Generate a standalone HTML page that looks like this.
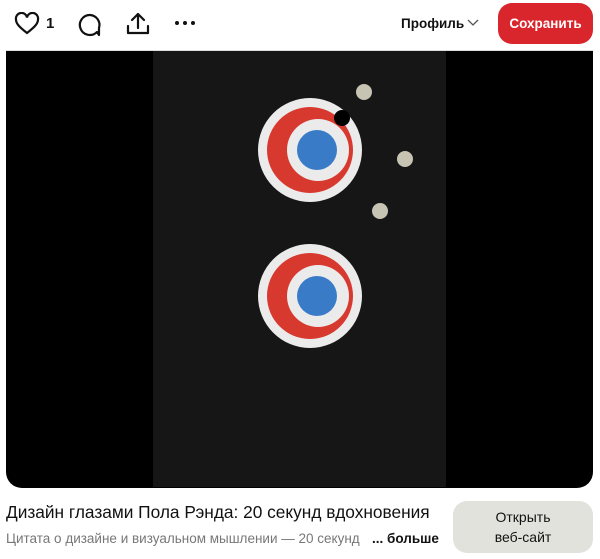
<!DOCTYPE html>
<html><head><meta charset="utf-8"><style>
body{margin:0;width:600px;height:559px;background:#fff;font-family:"Liberation Sans","Noto Sans CJK SC",sans-serif;position:relative;overflow:hidden}
.a{position:absolute}
</style></head><body>
<svg class="a" style="left:14px;top:12px" width="26" height="24" viewBox="0 0 26 24"><path d="M13 21 C4 14 2 11 2 7.5 A5 5 0 0 1 13 5.5 A5 5 0 0 1 24 7.5 C24 11 22 14 13 21Z" fill="none" stroke="#111" stroke-width="2.2"/></svg>
<div class="a" style="left:46px;top:15px;font-size:15px;font-weight:bold;color:#111">1</div>
<svg class="a" style="left:77px;top:12px" width="26" height="26" viewBox="0 0 26 26"><path d="M13 3 A10 10 0 1 0 20 20 L22 23 L22 16 A10 10 0 0 0 13 3Z" fill="none" stroke="#111" stroke-width="2.2" stroke-linejoin="round"/></svg>
<svg class="a" style="left:125px;top:11px" width="26" height="26" viewBox="0 0 26 26"><path d="M13 17 V3 M7 9 L13 3 L19 9 M3 15 V22 H23 V15" fill="none" stroke="#111" stroke-width="2.2" stroke-linecap="round" stroke-linejoin="round"/></svg>
<div class="a" style="left:175px;top:21px;width:4px;height:4px;border-radius:50%;background:#111;box-shadow:8px 0 #111,16px 0 #111"></div>
<div class="a" style="left:401px;top:16px;font-size:13.5px;font-weight:bold;color:#111">Профиль</div>
<svg class="a" style="left:467px;top:19px" width="12" height="8"><path d="M1 1 L6 6 L11 1" fill="none" stroke="#555" stroke-width="1.3"/></svg>
<div class="a" style="left:498px;top:3px;width:95px;height:41px;border-radius:14px;background:#d8262c;color:#fff;font-size:13.5px;font-weight:bold;line-height:41px;text-align:center">Сохранить</div>
<div class="a" style="left:6px;top:50px;width:587px;height:437px;background:#000;border-radius:0 0 16px 16px;overflow:hidden;border-top:1px solid #ddd">
<svg width="587" height="437" style="position:absolute;left:0;top:-1px">
<rect x="147" y="0" width="293" height="437" fill="#161616"/>
<g transform="translate(-6,-50)">
<circle cx="310" cy="150" r="52" fill="#ebebeb"/><circle cx="310" cy="150" r="43" fill="#d8392f"/><circle cx="318" cy="150" r="31" fill="#ebebeb"/><circle cx="317" cy="150" r="20" fill="#3a7bc8"/>
<circle cx="310" cy="296" r="52" fill="#ebebeb"/><circle cx="310" cy="296" r="43" fill="#d8392f"/><circle cx="318" cy="296" r="31" fill="#ebebeb"/><circle cx="317" cy="296" r="20" fill="#3a7bc8"/>
<circle cx="342" cy="118" r="8" fill="#000"/>
<circle cx="364" cy="92" r="8" fill="#c8c4b4"/><circle cx="405" cy="159" r="8" fill="#c8c4b4"/><circle cx="380" cy="211" r="8" fill="#c8c4b4"/>
</g></svg></div>
<div class="a" style="left:6px;top:502px;font-size:17.3px;color:#111;white-space:nowrap">Дизайн глазами Пола Рэнда: 20 секунд вдохновения</div>
<div class="a" style="left:6px;top:531px;font-size:13.5px;color:#777;white-space:nowrap;width:360px;overflow:hidden">Цитата о дизайне и визуальном мышлении — 20 секунд</div>
<div class="a" style="left:372px;top:531px;font-size:13.5px;font-weight:bold;color:#111">... больше</div>
<div class="a" style="left:453px;top:501px;width:140px;height:52px;border-radius:14px;background:#e2e2dc;color:#111;font-size:14px;text-align:center;line-height:20px;padding-top:6px;box-sizing:border-box">Открыть<br>веб-сайт</div>
</body></html>
